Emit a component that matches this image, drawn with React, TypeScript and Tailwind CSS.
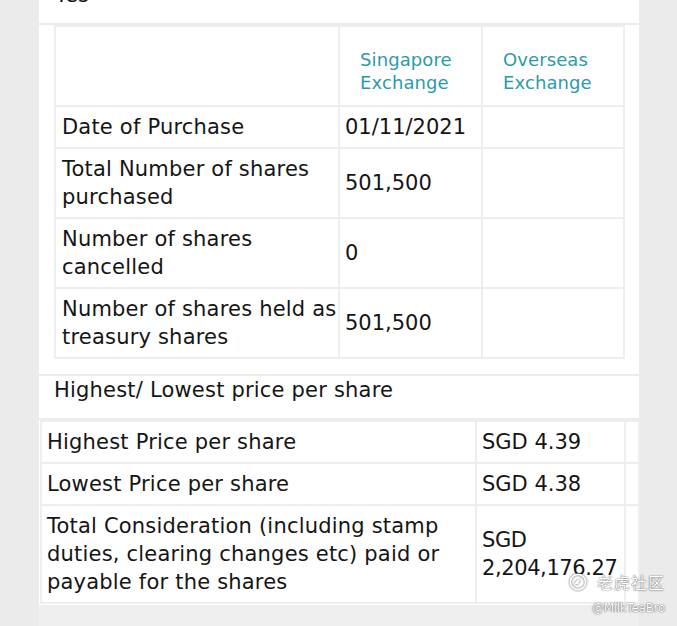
import React from 'react';

const cell = 'border-2 border-[#eeeeee] align-middle';

const buybackRows = [
  { label: 'Date of Purchase', value: '01/11/2021' },
  { label: 'Total Number of shares purchased', value: '501,500' },
  { label: 'Number of shares cancelled', value: '0' },
  { label: 'Number of shares held as treasury shares', value: '501,500' },
];

const priceRows = [
  { label: 'Highest Price per share', value: 'SGD 4.39', tight: false },
  { label: 'Lowest Price per share', value: 'SGD 4.38', tight: false },
  {
    label: 'Total Consideration (including stamp duties, clearing changes etc) paid or payable for the shares',
    value: 'SGD 2,204,176.27',
    tight: true,
  },
];

const Watermark: React.FC = () => (
  <div className="absolute right-[12px] top-[572px] flex flex-col items-end text-white [text-shadow:0_0_1px_rgba(0,0,0,0.7),0_0_2px_rgba(0,0,0,0.35)]">
    <div className="flex items-center gap-[10px]">
      <svg width="18" height="18" viewBox="0 0 20 20" className="drop-shadow-[0_0_1px_rgba(0,0,0,0.7)]">
        <circle cx="10" cy="10" r="8.5" fill="none" stroke="#ffffff" strokeWidth="1.8" />
        <path d="M6 13 C7 9 10 7 13 7 C11 9 10 11 11 13 C9 12 8 12 6 13 Z" fill="#ffffff" />
      </svg>
      <span className="font-['Noto_Sans_CJK_SC',sans-serif] text-[16px] leading-[20px] tracking-[1px]">老虎社区</span>
    </div>
    <span className="mt-[9px] font-['DejaVu_Sans',sans-serif] text-[12px] leading-[14px] tracking-[-0.3px]">@MilkTeaBro</span>
  </div>
);

export default function App() {
  return (
    <div className="relative min-h-screen bg-[#ebebeb] font-['DejaVu_Sans',sans-serif] text-[21px] leading-[28px] text-[#151515]">
      <div className="ml-[39px] w-[600px] bg-white">
        {/* answer row, cut at the top */}
        <div className="h-[23px] overflow-hidden pl-[16px]">
          <div className="-mt-[19px]">Yes</div>
        </div>

        {/* purchase breakdown */}
        <div className="border-t-2 border-[#ececec] pl-[15px] pr-[16px] pb-[15px]">
          <table className="w-[569px] table-fixed border-collapse border-2 border-[#eeeeee]">
            <colgroup>
              <col className="w-[284px]" />
              <col className="w-[143px]" />
              <col className="w-[142px]" />
            </colgroup>
            <tbody>
              <tr className="h-[80px]">
                <td className={cell}></td>
                <td className={`${cell} pl-[20px] pt-[20px] pb-[10px] text-[18px] leading-[23px] tracking-[0.1px] text-[#2b9bab]`}>
                  Singapore Exchange
                </td>
                <td className={`${cell} pl-[20px] pt-[20px] pb-[10px] text-[18px] leading-[23px] tracking-[0.1px] text-[#2b9bab]`}>
                  Overseas Exchange
                </td>
              </tr>
              {buybackRows.map((row) => (
                <tr key={row.label}>
                  <td className={`${cell} pl-[6px] pr-0 py-[6px] tracking-[0.2px]`}>{row.label}</td>
                  <td className={`${cell} pl-[5px] py-[6px]`}>{row.value}</td>
                  <td className={cell}></td>
                </tr>
              ))}
            </tbody>
          </table>
        </div>

        <div className="border-t-2 border-[#ececec] pl-[15px] pb-[14px] tracking-[0.2px]">Highest/ Lowest price per share</div>

        {/* price table */}
        <div className="border-t-2 border-[#ececec]">
          <table className="ml-[1px] w-[598px] table-fixed border-collapse">
            <colgroup>
              <col className="w-[435px]" />
              <col className="w-[149px]" />
              <col className="w-[14px]" />
            </colgroup>
            <tbody>
              {priceRows.map((row) => (
                <tr key={row.label}>
                  <td className={`${cell} pl-[5px] pr-[4px] py-[6px] tracking-[0.2px]`}>{row.label}</td>
                  <td className={`${cell} pl-[5px] pr-0 py-[6px] ${row.tight ? 'tracking-[-0.4px]' : ''}`}>{row.value}</td>
                  <td className={cell}></td>
                </tr>
              ))}
              <tr className="h-[2px]"></tr>
            </tbody>
          </table>
        </div>
      </div>
      <div className="ml-[39px] h-[30px] w-[600px] bg-[#efefef]"></div>

      <Watermark />
    </div>
  );
}
